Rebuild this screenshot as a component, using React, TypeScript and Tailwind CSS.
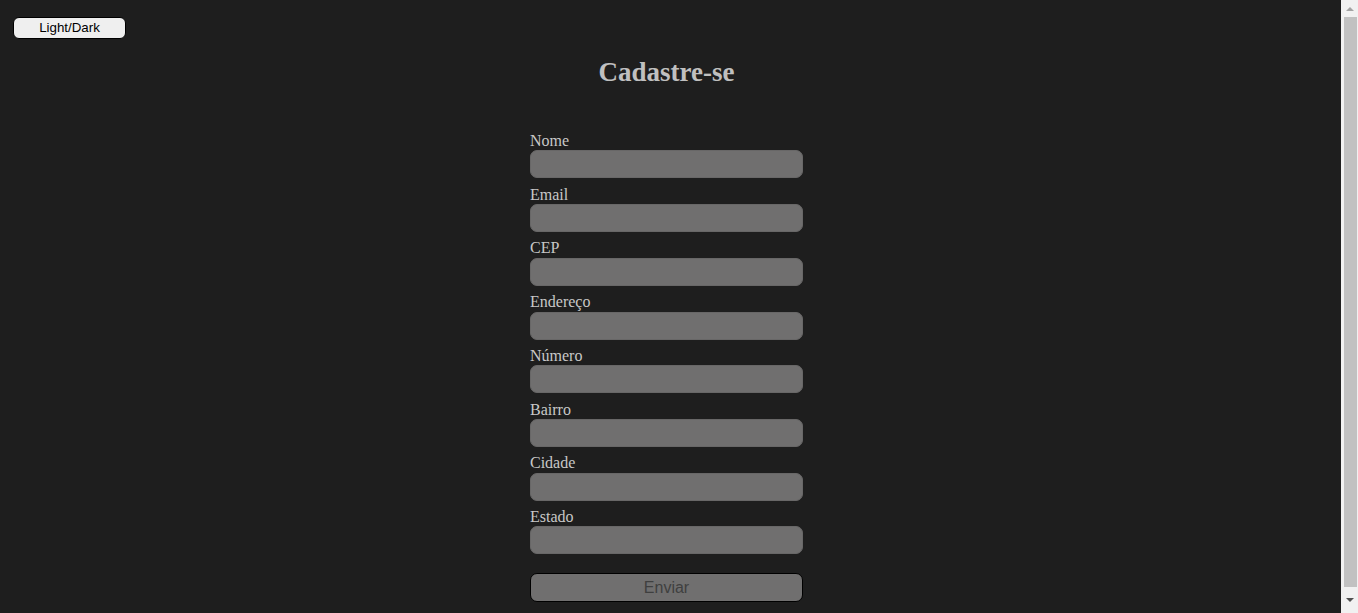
const fields = ["Nome", "Email", "CEP", "Endereço", "Número", "Bairro", "Cidade", "Estado"];

function Scrollbar() {
  return (
    <div className="flex h-[613px] w-[17px] shrink-0 flex-col items-center bg-[#f1f1f1]">
      <div className="flex h-[17px] w-full items-center justify-center">
        <div className="h-0 w-0 border-x-[4px] border-b-[4px] border-x-transparent border-b-[#a3a3a3]" />
      </div>
      <div className="ml-[1px] h-[570px] w-[13px] bg-[#c1c1c1]" />
      <div className="flex flex-1 w-full items-center justify-center">
        <div className="h-0 w-0 border-x-[4px] border-t-[4px] border-x-transparent border-t-[#505050]" />
      </div>
    </div>
  );
}

export default function App() {
  return (
    <div className="flex h-[613px] overflow-hidden bg-[#1e1e1e]">
      <main className="flex-1 font-['Liberation_Serif',serif] text-[#c8c8c8]">
        <div className="pt-[17px] pl-[13px]">
          <button className="block h-[22px] w-[113px] rounded-[6px] border border-black bg-[#efefef] font-['Liberation_Sans',sans-serif] text-[13.33px] text-black">
            Light/Dark
          </button>
        </div>
        <div className="flex flex-col items-center pr-2">
          <h1 className="mt-[18px] text-[27px] font-bold leading-[31px] text-[#c0c0c0]">Cadastre-se</h1>
          <form className="mt-[44px] flex w-[273px] flex-col">
            {fields.map((f) => (
              <label key={f} className="flex flex-col text-[16px] leading-[18.4px]">
                <span>{f}</span>
                <input className="mb-[7.3px] h-[28px] w-full rounded-[7px] border border-[#686767] bg-[#706f6f] outline-none" />
              </label>
            ))}
            <button
              type="button"
              className="mt-[11px] h-[29px] w-[273px] rounded-[7px] border border-black bg-[#706f6f] pt-[1px] font-['Liberation_Sans',sans-serif] text-[16px] text-[#3f3f3f]"
            >
              Enviar
            </button>
          </form>
        </div>
      </main>
      <Scrollbar />
    </div>
  );
}
